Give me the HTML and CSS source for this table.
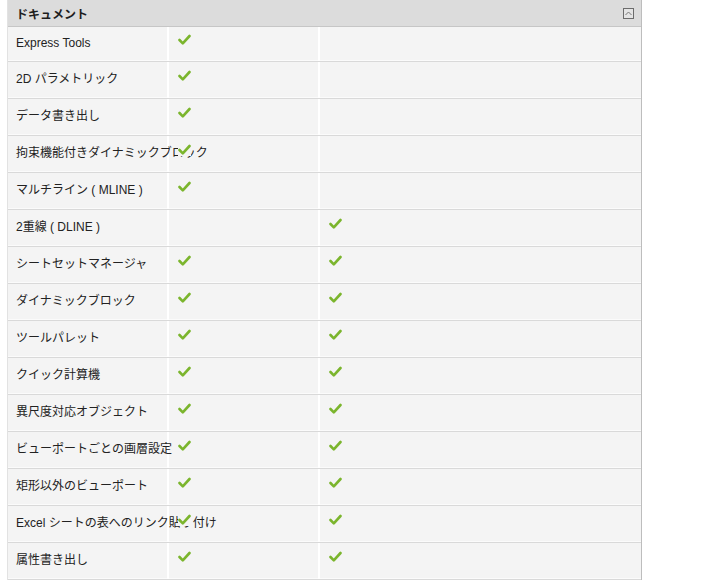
FILE: index.html
```html
<!DOCTYPE html>
<html lang="ja">
<head>
<meta charset="utf-8">
<link rel="stylesheet" href="styles.css">
</head>
<body>
<div class="panel">
  <div class="head">
    <span class="title">ドキュメント</span>
    <span class="toggle"><svg width="7" height="5" viewBox="0 0 7 5"><path d="M0.5 4 L3.5 1 L6.5 4" fill="none" stroke="#777" stroke-width="1"/></svg></span>
  </div>
  <div class="row first"><div class="name">Express Tools</div><div class="c"><i class="ck"></i></div><div class="c"></div></div>
  <div class="row"><div class="name">2D パラメトリック</div><div class="c"><i class="ck"></i></div><div class="c"></div></div>
  <div class="row"><div class="name">データ書き出し</div><div class="c"><i class="ck"></i></div><div class="c"></div></div>
  <div class="row"><div class="name">拘束機能付きダイナミックブロック</div><div class="c"><i class="ck"></i></div><div class="c"></div></div>
  <div class="row"><div class="name">マルチライン ( MLINE )</div><div class="c"><i class="ck"></i></div><div class="c"></div></div>
  <div class="row"><div class="name">2重線 ( DLINE )</div><div class="c"></div><div class="c"><i class="ck"></i></div></div>
  <div class="row"><div class="name">シートセットマネージャ</div><div class="c"><i class="ck"></i></div><div class="c"><i class="ck"></i></div></div>
  <div class="row"><div class="name">ダイナミックブロック</div><div class="c"><i class="ck"></i></div><div class="c"><i class="ck"></i></div></div>
  <div class="row"><div class="name">ツールパレット</div><div class="c"><i class="ck"></i></div><div class="c"><i class="ck"></i></div></div>
  <div class="row"><div class="name">クイック計算機</div><div class="c"><i class="ck"></i></div><div class="c"><i class="ck"></i></div></div>
  <div class="row"><div class="name">異尺度対応オブジェクト</div><div class="c"><i class="ck"></i></div><div class="c"><i class="ck"></i></div></div>
  <div class="row"><div class="name">ビューポートごとの画層設定</div><div class="c"><i class="ck"></i></div><div class="c"><i class="ck"></i></div></div>
  <div class="row"><div class="name">矩形以外のビューポート</div><div class="c"><i class="ck"></i></div><div class="c"><i class="ck"></i></div></div>
  <div class="row"><div class="name">Excel シートの表へのリンク貼り付け</div><div class="c"><i class="ck"></i></div><div class="c"><i class="ck"></i></div></div>
  <div class="row"><div class="name">属性書き出し</div><div class="c"><i class="ck"></i></div><div class="c"><i class="ck"></i></div></div>
</div>
</body>
</html>
```
FILE: styles.css
```css
html, body {
  margin: 0;
  padding: 0;
  background: #fff;
}
body {
  font-family: "Liberation Sans", Arial, "Noto Sans CJK JP", sans-serif;
  font-size: 12px;
  color: #222;
}
.panel {
  margin-left: 7px;
  width: 633px;
  border-left: 1px solid #e2e2e2;
  border-right: 1px solid #bdbdbd;
}
.head {
  height: 26px;
  background: #dcdcdc;
  border-bottom: 1px solid #c6c6c6;
  display: flex;
  align-items: center;
  justify-content: space-between;
  padding: 0 7px 0 8px;
}
.title {
  font-weight: bold;
  font-size: 12px;
  color: #1e1e1e;
  padding-top: 1px;
}
.toggle {
  width: 9px;
  height: 9px;
  border: 1px solid #6c6c6c;
  background: #e4e4e4;
  display: flex;
  align-items: center;
  justify-content: center;
}
.row {
  display: grid;
  grid-template-columns: 159px 151px 1fr;
  height: 36px;
  background: #f4f4f4;
  border-bottom: 1px solid #d9d9d9;
  box-shadow: inset 0 -1px 0 #fbfbfb;
}
.row.first {
  height: 34px;
}
.row.first .name {
  padding-top: 9px;
}
.row.first .ck {
  top: 7px;
}
.name {
  padding: 10px 0 0 8px;
  line-height: 15px;
  white-space: nowrap;
  position: relative;
  z-index: 1;
}
.c {
  border-left: 2px solid #fff;
  position: relative;
}
.ck {
  position: absolute;
  z-index: 2;
  left: 9px;
  top: 8px;
  width: 13px;
  height: 12px;
  background: #f4f4f4 url("data:image/svg+xml;utf8,<svg xmlns='http://www.w3.org/2000/svg' width='13' height='12' viewBox='0 0 13 12'><path d='M1.5 6 L4.8 9.3 L11.5 2' fill='none' stroke='%237bb52d' stroke-width='2.6' stroke-linecap='round' stroke-linejoin='round'/></svg>") no-repeat 0 0;
}
```
